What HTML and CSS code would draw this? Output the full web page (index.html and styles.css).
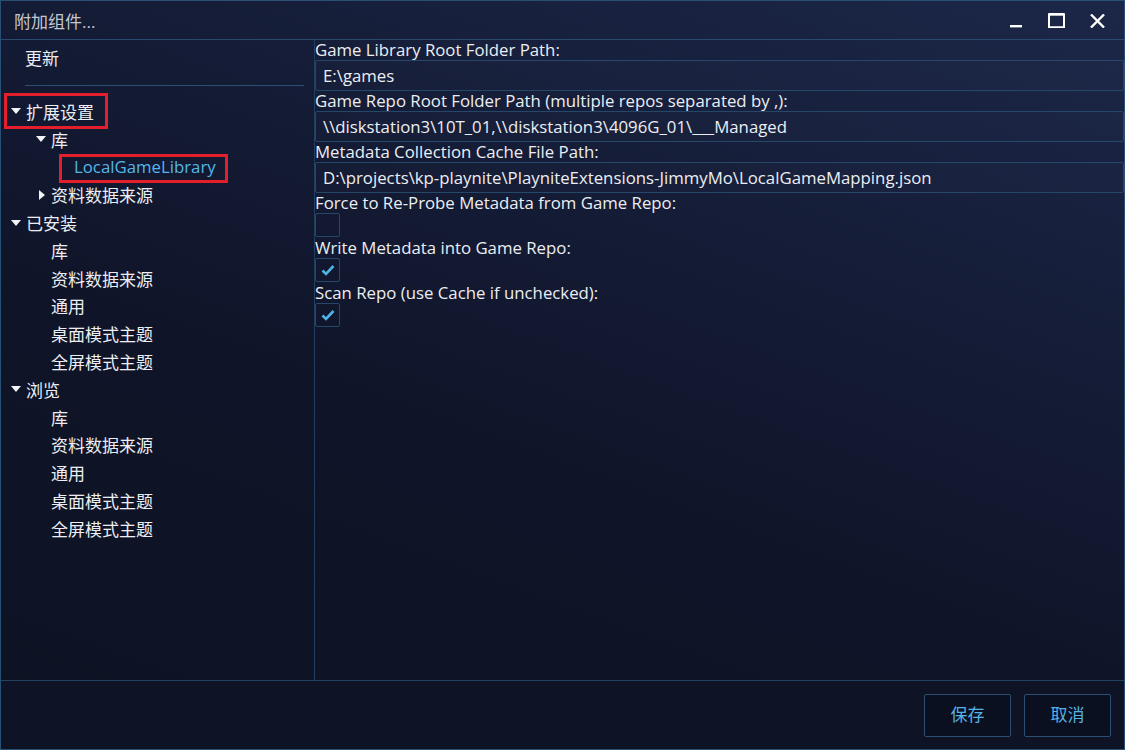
FILE: index.html
```html
<!DOCTYPE html>
<html lang="zh-CN">
<head>
    <meta charset="UTF-8">
    <title>附加组件...</title>
    <link rel="stylesheet" href="styles.css">
</head>
<body>
    <div class="window">
        <div class="titlebar">
            <span class="title">附加组件...</span>
            <div class="win-buttons">
                <span class="win-btn">
                    <svg width="14" height="14" viewBox="0 0 14 14"><rect x="1" y="11" width="12" height="2.4" fill="#fff"/></svg>
                </span>
                <span class="win-btn">
                    <svg width="17" height="15" viewBox="0 0 17 15"><path d="M1 1.2h15v13H1z" fill="none" stroke="#fff" stroke-width="2"/><rect x="1" y="0" width="15" height="2.6" fill="#fff"/></svg>
                </span>
                <span class="win-btn">
                    <svg width="15" height="14" viewBox="0 0 15 14"><path d="M1 0.5l13 13M14 0.5l-13 13" stroke="#fff" stroke-width="2.4"/></svg>
                </span>
            </div>
        </div>

        <div class="main">
            <div class="sidebar">
                <div class="tree-row top">更新</div>
                <div class="sep"></div>

                <div class="tree-row lvl0">
                    <span class="hl hl-group">
                        <span class="arrow down"></span>扩展设置
                    </span>
                </div>
                <div class="tree-row lvl1"><span class="arrow down"></span>库</div>
                <div class="tree-row lvl2"><span class="hl hl-item selected">LocalGameLibrary</span></div>
                <div class="tree-row lvl1"><span class="arrow right"></span>资料数据来源</div>

                <div class="tree-row lvl0"><span class="arrow down"></span>已安装</div>
                <div class="tree-row lvl1"><span class="arrow none"></span>库</div>
                <div class="tree-row lvl1"><span class="arrow none"></span>资料数据来源</div>
                <div class="tree-row lvl1"><span class="arrow none"></span>通用</div>
                <div class="tree-row lvl1"><span class="arrow none"></span>桌面模式主题</div>
                <div class="tree-row lvl1"><span class="arrow none"></span>全屏模式主题</div>

                <div class="tree-row lvl0"><span class="arrow down"></span>浏览</div>
                <div class="tree-row lvl1"><span class="arrow none"></span>库</div>
                <div class="tree-row lvl1"><span class="arrow none"></span>资料数据来源</div>
                <div class="tree-row lvl1"><span class="arrow none"></span>通用</div>
                <div class="tree-row lvl1"><span class="arrow none"></span>桌面模式主题</div>
                <div class="tree-row lvl1"><span class="arrow none"></span>全屏模式主题</div>
            </div>

            <div class="settings">
                <div class="label">Game Library Root Folder Path:</div>
                <div class="field">E:\games</div>

                <div class="label">Game Repo Root Folder Path (multiple repos separated by ,):</div>
                <div class="field">\\diskstation3\10T_01,\\diskstation3\4096G_01\___Managed</div>

                <div class="label">Metadata Collection Cache File Path:</div>
                <div class="field">D:\projects\kp-playnite\PlayniteExtensions-JimmyMo\LocalGameMapping.json</div>

                <div class="label">Force to Re-Probe Metadata from Game Repo:</div>
                <div class="check"></div>

                <div class="label">Write Metadata into Game Repo:</div>
                <div class="check checked">
                    <svg width="14" height="12" viewBox="0 0 14 12"><path d="M1.5 6.5l3.5 3.5 7.5-8" fill="none" stroke="#4fb3e8" stroke-width="2.6"/></svg>
                </div>

                <div class="label">Scan Repo (use Cache if unchecked):</div>
                <div class="check checked">
                    <svg width="14" height="12" viewBox="0 0 14 12"><path d="M1.5 6.5l3.5 3.5 7.5-8" fill="none" stroke="#4fb3e8" stroke-width="2.6"/></svg>
                </div>
            </div>
        </div>

        <div class="footer">
            <button class="btn">保存</button>
            <button class="btn">取消</button>
        </div>
    </div>
</body>
</html>
```

FILE: styles.css
```css
* {
    margin: 0;
    padding: 0;
    box-sizing: border-box;
}

body {
    width: 1125px;
    height: 750px;
    overflow: hidden;
    font-family: 'Open Sans', 'Noto Sans CJK SC', sans-serif;
    font-size: 17px;
    color: #eceef3;
    background: #0e1326;
}

.window {
    width: 1125px;
    height: 750px;
    border: 1px solid #2a4f74;
    display: flex;
    flex-direction: column;
    background: linear-gradient(200deg, #1c2748 0%, #151d38 30%, #0f1428 60%, #0d1223 100%);
}

/* title bar */
.titlebar {
    height: 39px;
    border-bottom: 1px solid #284a6e;
    display: flex;
    align-items: center;
    justify-content: space-between;
    padding-left: 13px;
}

.title {
    color: #c3c7d0;
    font-size: 17px;
}

.win-buttons {
    display: flex;
    padding-right: 6px;
    padding-top: 1px;
}

.win-btn {
    width: 41px;
    height: 38px;
    display: flex;
    align-items: center;
    justify-content: center;
}

/* main area */
.main {
    flex: 1;
    display: flex;
    min-height: 0;
}

.sidebar {
    width: 314px;
    border-right: 1px solid #223f5f;
    padding-top: 3px;
}

.tree-row {
    height: 27.8px;
    display: flex;
    align-items: center;
    white-space: nowrap;
}

.tree-row.top {
    height: 28px;
    padding-left: 24px;
}

.sep {
    height: 1px;
    background: #2a5072;
    margin: 14px 10px 11.5px 24px;
}

.lvl0 { padding-left: 10px; }
.lvl1 { padding-left: 35px; }
.lvl2 { padding-left: 73px; }

.arrow {
    width: 15px;
    height: 10px;
    flex-shrink: 0;
    position: relative;
}

.arrow.down::before {
    content: '';
    position: absolute;
    left: 0;
    top: 2px;
    border-left: 5px solid transparent;
    border-right: 5px solid transparent;
    border-top: 6px solid #f2f3f6;
}

.arrow.right::before {
    content: '';
    position: absolute;
    left: 3px;
    top: 0;
    border-top: 5px solid transparent;
    border-bottom: 5px solid transparent;
    border-left: 6px solid #f2f3f6;
}

.hl {
    display: inline-flex;
    align-items: center;
    align-self: stretch;
    position: relative;
}

.hl::after {
    content: '';
    position: absolute;
    border: 3px solid #e21f2a;
}

.hl-group::after {
    left: -7px;
    right: -14px;
    top: -4.5px;
    bottom: -3.5px;
}

.hl-item::after {
    left: -15px;
    right: -12px;
    top: 0.5px;
    bottom: -2.5px;
}

.selected {
    color: #56b6ea;
    font-size: 16.8px;
}

/* settings */
.settings {
    flex: 1;
    display: flex;
    flex-direction: column;
    font-size: 16.8px;
}

.label {
    height: 20px;
    line-height: 20px;
    white-space: nowrap;
}

.field {
    height: 31px;
    border: 1px solid #25476a;
    border-radius: 2px;
    padding-left: 7px;
    display: flex;
    align-items: center;
    white-space: nowrap;
    background: rgba(255, 255, 255, 0.01);
}

.check {
    width: 25px;
    height: 24px;
    margin-bottom: 1px;
    border: 1px solid #25476a;
    border-radius: 2px;
    display: flex;
    align-items: center;
    justify-content: center;
}

/* footer */
.footer {
    height: 69px;
    border-top: 1px solid #234262;
    display: flex;
    justify-content: flex-end;
    align-items: center;
    gap: 13px;
    padding-right: 13px;
    background: #0e1325;
}

.btn {
    width: 87px;
    height: 43px;
    padding-bottom: 3px;
    border: 1px solid #2a4f72;
    border-radius: 2px;
    background: #0b1020;
    color: #55b3e6;
    font-family: 'Noto Sans CJK SC', sans-serif;
    font-size: 17px;
    cursor: pointer;
}
```
